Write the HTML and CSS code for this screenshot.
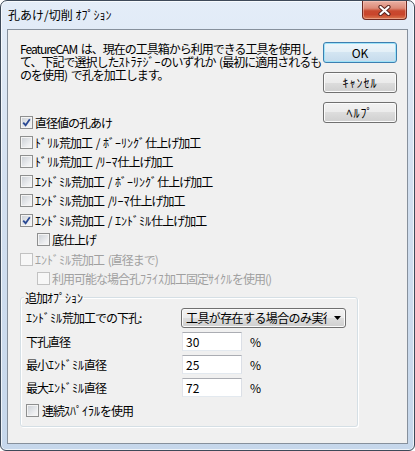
FILE: index.html
```html
<!DOCTYPE html>
<html lang="ja">
<head>
<meta charset="utf-8">
<title>孔あけ/切削 ｵﾌﾟｼｮﾝ</title>
<link rel="stylesheet" href="styles.css">
</head>
<body>
<div class="window">
  <div class="titlebar">
    <span class="title">孔あけ/切削 ｵﾌﾟｼｮﾝ</span>
    <div class="close">
      <svg width="13" height="11" viewBox="0 0 13 11">
        <path d="M2.5 2 L10.5 9 M10.5 2 L2.5 9" stroke="#5b2620" stroke-width="4.2" stroke-linecap="round"/>
        <path d="M2.5 2 L10.5 9 M10.5 2 L2.5 9" stroke="#ffffff" stroke-width="2.2" stroke-linecap="round"/>
      </svg>
    </div>
  </div>
  <div class="client">
    <div class="top">
      <div class="left">
        <p class="desc">FeatureCAM は、現在の工具箱から利用できる工具を使用し<br>て、下記で選択した<span class="hw">ｽﾄﾗﾃｼﾞｰ</span>のいずれか (最初に適用されるも<br>のを使用) で孔を加工します。</p>
        <div class="options">
          <div class="row"><span class="cb checked"><svg width="9" height="9" viewBox="0 0 9 9"><path d="M1.2 4.6 L3.6 7.2 L7.8 1.2" fill="none" stroke="#2b4a94" stroke-width="1.8"/></svg></span>直径値の孔あけ</div>
          <div class="row"><span class="cb"></span><span class="hw">ﾄﾞﾘﾙ</span>荒加工 / <span class="hw">ﾎﾞｰﾘﾝｸﾞ</span>仕上げ加工</div>
          <div class="row"><span class="cb"></span><span class="hw">ﾄﾞﾘﾙ</span>荒加工 /<span class="hw">ﾘｰﾏ</span>仕上げ加工</div>
          <div class="row"><span class="cb"></span><span class="hw">ｴﾝﾄﾞﾐﾙ</span>荒加工 / <span class="hw">ﾎﾞｰﾘﾝｸﾞ</span>仕上げ加工</div>
          <div class="row"><span class="cb"></span><span class="hw">ｴﾝﾄﾞﾐﾙ</span>荒加工 /<span class="hw">ﾘｰﾏ</span>仕上げ加工</div>
          <div class="row"><span class="cb checked"><svg width="9" height="9" viewBox="0 0 9 9"><path d="M1.2 4.6 L3.6 7.2 L7.8 1.2" fill="none" stroke="#2b4a94" stroke-width="1.8"/></svg></span><span class="hw">ｴﾝﾄﾞﾐﾙ</span>荒加工 / <span class="hw">ｴﾝﾄﾞﾐﾙ</span>仕上げ加工</div>
          <div class="row indent"><span class="cb"></span>底仕上げ</div>
          <div class="row disabled"><span class="cb"></span><span class="hw">ｴﾝﾄﾞﾐﾙ</span>荒加工 (直径まで)</div>
          <div class="row indent disabled"><span class="cb"></span>利用可能な場合孔<span class="hw">ﾌﾗｲｽ</span>加工固定<span class="hw">ｻｲｸﾙ</span>を使用()</div>
        </div>
      </div>
      <div class="buttons">
        <div class="btn default">OK</div>
        <div class="btn hw">ｷｬﾝｾﾙ</div>
        <div class="btn hw">ﾍﾙﾌﾟ</div>
      </div>
    </div>
    <fieldset class="group">
      <legend>追加<span class="hw">ｵﾌﾟｼｮﾝ</span></legend>
      <div class="grow combo-row">
        <span class="glabel"><span class="hw">ｴﾝﾄﾞﾐﾙ</span>荒加工での下孔:</span>
        <div class="combo">
          <span class="combo-text">工具が存在する場合のみ実行</span>
          <svg class="arrow" width="7" height="4" viewBox="0 0 7 4"><polygon points="0,0 7,0 3.5,4" fill="#000"/></svg>
        </div>
      </div>
      <div class="grow field">
        <span class="glabel wide">下孔直径</span>
        <span class="input">30</span>
        <span class="pct">%</span>
      </div>
      <div class="grow field">
        <span class="glabel wide">最小<span class="hw">ｴﾝﾄﾞﾐﾙ</span>直径</span>
        <span class="input">25</span>
        <span class="pct">%</span>
      </div>
      <div class="grow field">
        <span class="glabel wide">最大<span class="hw">ｴﾝﾄﾞﾐﾙ</span>直径</span>
        <span class="input">72</span>
        <span class="pct">%</span>
      </div>
      <div class="grow check-row">
        <span class="cb"></span><span class="cb-label">連続<span class="hw">ｽﾊﾟｲﾗﾙ</span>を使用</span>
      </div>
    </fieldset>
  </div>
</div>
</body>
</html>
```
FILE: styles.css
```css
html, body {
  margin: 0;
  padding: 0;
  background: #ffffff;
}
body {
  font-family: "Noto Sans CJK JP", "Liberation Sans", sans-serif;
  font-size: 12px;
  letter-spacing: -1px;
  word-spacing: 2px;
  color: #000;
}
.hw {
  letter-spacing: 0;
}
.window {
  width: 415px;
  height: 451px;
  box-sizing: border-box;
  border: 1px solid #3e4a59;
  border-radius: 7px 7px 6px 6px;
  background: linear-gradient(#e4edf8, #d3e0f0 40%, #c6d7eb);
  box-shadow: inset 0 0 0 1px rgba(255, 255, 255, 0.7);
  display: flex;
  flex-direction: column;
  overflow: hidden;
}
.titlebar {
  height: 28px;
  flex: none;
  display: flex;
  align-items: center;
  padding-left: 7px;
}
.title {
  line-height: 14px;
  white-space: nowrap;
  letter-spacing: 0;
  word-spacing: 0;
}
.close {
  margin-left: auto;
  margin-right: 7px;
  align-self: flex-start;
  width: 45px;
  height: 19px;
  box-sizing: border-box;
  border: 1px solid #6d2a22;
  border-top: none;
  border-radius: 0 0 4px 4px;
  background: linear-gradient(#eab1a4, #dd8a78 40%, #c8492f 55%, #c9452c 75%, #d9774e);
  box-shadow: inset 0 0 0 1px rgba(255, 210, 200, 0.45);
  display: flex;
  align-items: center;
  justify-content: center;
}
.client {
  flex: 1;
  margin: 0 6px 6px;
  border: 1px solid #86909c;
  background: #f0f0f0;
  padding: 12px 10px 0 12px;
}
.top {
  display: flex;
}
.left {
  flex: 1;
  min-width: 0;
}
.desc {
  margin: 0;
  line-height: 13px;
  white-space: nowrap;
}
.options {
  margin-top: 32px;
}
.row {
  height: 19.5px;
  display: flex;
  align-items: center;
  white-space: pre;
}
.row.indent {
  padding-left: 17px;
}
.row.disabled {
  color: #a0a0a0;
}
.cb {
  flex: none;
  width: 13px;
  height: 13px;
  box-sizing: border-box;
  border: 1px solid #8e8f8f;
  background: linear-gradient(135deg, #c9ced4, #eeeff1 70%, #f7f7f7);
  box-shadow: inset 0 0 0 1px #f4f4f4;
  margin-right: 2px;
  display: flex;
  align-items: center;
  justify-content: center;
}
.row.disabled .cb {
  border-color: #c2c2c2;
  background: #f7f7f7;
  box-shadow: none;
}
.buttons {
  flex: none;
  width: 74px;
  display: flex;
  flex-direction: column;
  gap: 9px;
}
.btn {
  height: 21px;
  box-sizing: border-box;
  border: 1px solid #707070;
  border-radius: 3px;
  background: linear-gradient(#f2f2f2 0%, #ebebeb 50%, #dddddd 50%, #cfcfcf 100%);
  box-shadow: inset 0 0 0 1px #fbfbfb;
  display: flex;
  align-items: center;
  justify-content: center;
  line-height: 14px;
  letter-spacing: 0;
}
.btn.hw {
  letter-spacing: 1px;
}
.btn.default {
  border-color: #3c7fb1;
  box-shadow: inset 0 0 0 1px #9fe3f8;
  background: linear-gradient(#eef6fb 0%, #e3eff7 50%, #d3e5f2 50%, #c6dbec 100%);
}
.group {
  margin: 2px 0 0 0;
  width: 338px;
  min-width: 0;
  box-sizing: border-box;
  border: 1px solid #d5dfe5;
  border-radius: 3px;
  box-shadow: inset 1px 1px 0 #ffffff, 1px 1px 0 #ffffff;
  padding: 1px 5px 3px 5px;
}
.group legend {
  padding: 0 1px;
  margin-left: -2px;
  line-height: 14px;
}
.grow {
  display: flex;
  align-items: center;
  white-space: nowrap;
}
.combo-row {
  height: 24px;
}
.field {
  height: 23px;
}
.check-row {
  height: 24px;
}
.glabel {
  width: 155px;
  flex: none;
}
.glabel.wide {
  width: 156px;
}
.combo {
  width: 165px;
  height: 20px;
  box-sizing: border-box;
  border: 1px solid #707070;
  border-radius: 3px;
  background: linear-gradient(#f2f2f2 0%, #ebebeb 50%, #dddddd 50%, #cfcfcf 100%);
  box-shadow: inset 0 0 0 1px #fbfbfb;
  display: flex;
  align-items: center;
  padding-left: 4px;
}
.combo-text {
  width: 141px;
  overflow: hidden;
  white-space: nowrap;
  line-height: 14px;
  letter-spacing: -0.6px;
}
.arrow {
  margin-left: 7px;
  flex: none;
}
.input {
  width: 60px;
  height: 19px;
  box-sizing: border-box;
  border: 1px solid;
  border-color: #abadb3 #dbdfe6 #e3e9ef #e2e3ea;
  background: #ffffff;
  padding-left: 3px;
  display: flex;
  align-items: center;
  flex: none;
  letter-spacing: 0;
}
.pct {
  margin-left: 8px;
}
.check-row .cb {
  margin-right: 3px;
}
```
